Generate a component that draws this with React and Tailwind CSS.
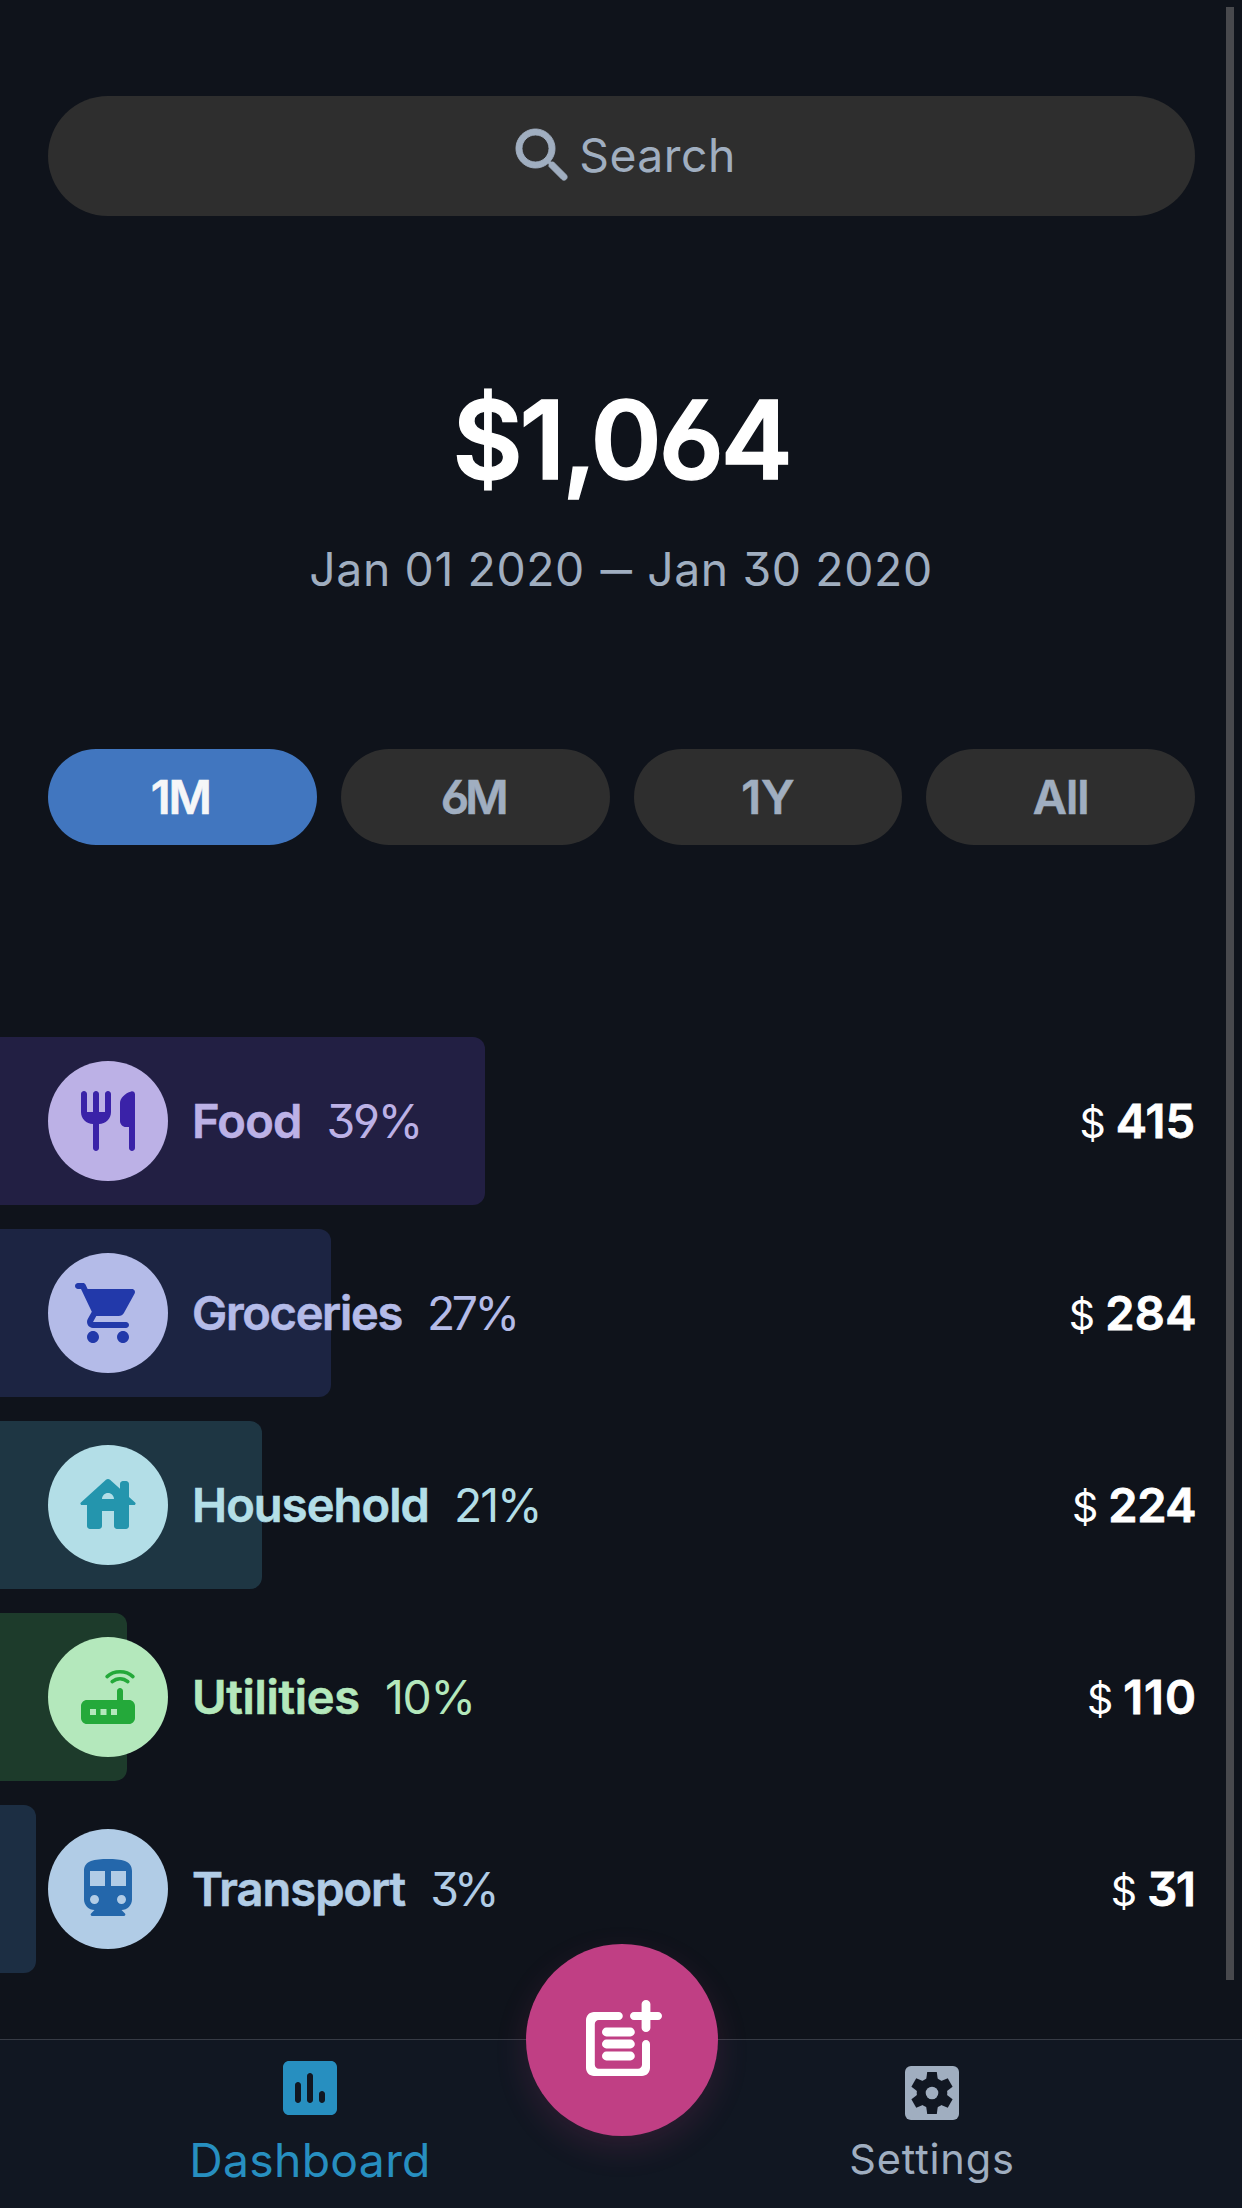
import React from "react";

function Icon({ className, children }) {
  return (
    <svg viewBox="0 0 24 24" fill="currentColor" className={`shrink-0 ${className}`} aria-hidden="true">
      {children}
    </svg>
  );
}

const SearchIcon = () => (
  <Icon className="size-[72px]">
    <path
      stroke="currentColor"
      strokeWidth="0.3"
      d="M15.5 14h-.79l-.28-.27c1.2-1.4 1.82-3.31 1.48-5.34-.47-2.78-2.79-5-5.59-5.34-4.23-.52-7.79 3.04-7.27 7.27.34 2.8 2.56 5.12 5.34 5.59 2.03.34 3.94-.28 5.34-1.48l.27.28v.79l4.25 4.25c.41.41 1.08.41 1.49 0 .41-.41.41-1.08 0-1.49L15.5 14zm-6 0C7.01 14 5 11.99 5 9.5S7.01 5 9.5 5 14 7.01 14 9.5 11.99 14 9.5 14z"
    />
  </Icon>
);

const FoodIcon = () => (
  <Icon className="size-[72px]">
    <path d="M16 6v6c0 1.1.9 2 2 2h1v7c0 .55.45 1 1 1s1-.45 1-1V3.13c0-.65-.61-1.13-1.24-.98C17.6 2.68 16 4.51 16 6zm-5 3H9V3c0-.55-.45-1-1-1s-1 .45-1 1v6H5V3c0-.55-.45-1-1-1s-1 .45-1 1v6c0 2.21 1.79 4 4 4v8c0 .55.45 1 1 1s1-.45 1-1v-8c2.21 0 4-1.79 4-4V3c0-.55-.45-1-1-1s-1 .45-1 1v6z" />
  </Icon>
);

const CartIcon = () => (
  <Icon className="size-[72px]">
    <path d="M7 18c-1.1 0-1.99.9-1.99 2S5.9 22 7 22s2-.9 2-2-.9-2-2-2zM1 3c0 .55.45 1 1 1h1l3.6 7.59-1.35 2.44C4.52 15.37 5.48 17 7 17h11c.55 0 1-.45 1-1s-.45-1-1-1H7l1.1-2h7.45c.75 0 1.41-.41 1.75-1.03l3.58-6.49c.37-.66-.11-1.48-.87-1.48H5.21l-.67-1.43c-.16-.35-.52-.57-.9-.57H2c-.55 0-1 .45-1 1zm16 15c-1.1 0-1.99.9-1.99 2s.89 2 1.99 2 2-.9 2-2-.9-2-2-2z" />
  </Icon>
);

const HouseIcon = () => (
  <Icon className="size-[72px]">
    <path d="M19 9.3V5c0-.55-.45-1-1-1h-1c-.55 0-1 .45-1 1v1.6l-3.33-3c-.38-.34-.96-.34-1.34 0l-8.36 7.53c-.34.3-.13.87.33.87H5v7c0 .55.45 1 1 1h3c.55 0 1-.45 1-1v-5h4v5c0 .55.45 1 1 1h3c.55 0 1-.45 1-1v-7h1.7c.46 0 .68-.57.33-.87L19 9.3zM10 10c0-1.1.9-2 2-2s2 .9 2 2h-4z" />
  </Icon>
);

const RouterIcon = () => (
  <Icon className="size-[72px]">
    <path d="M19 13h-2v-3c0-.55-.45-1-1-1s-1 .45-1 1v3H5c-1.1 0-2 .9-2 2v4c0 1.1.9 2 2 2h14c1.1 0 2-.9 2-2v-4c0-1.1-.9-2-2-2zM8 18H6v-2h2v2zm3.5 0h-2v-2h2v2zm3.5 0h-2v-2h2v2z" />
    <g fill="none" stroke="currentColor" strokeWidth="1.2" strokeLinecap="round">
      <path d="M11.7 5.2C12.9 4.1 14.4 3.6 16 3.6s3.1.5 4.3 1.6" />
      <path d="M13.4 6.9c.7-.6 1.6-1 2.6-1s1.9.4 2.6 1" />
    </g>
  </Icon>
);

const TrainIcon = () => (
  <Icon className="size-[72px]">
    <path d="M12 2c-4.42 0-8 .5-8 4v9.5C4 17.43 5.57 19 7.5 19l-1.15 1.15c-.31.31-.09.85.36.85H17.3c.45 0 .66-.54.35-.85L16.5 19c1.93 0 3.5-1.57 3.5-3.5V6c0-3.5-3.58-4-8-4zM7.5 17c-.83 0-1.5-.67-1.5-1.5S6.67 14 7.5 14s1.5.67 1.5 1.5S8.33 17 7.5 17zm3.5-6H6V6h5v5zm5.5 6c-.83 0-1.5-.67-1.5-1.5s.67-1.5 1.5-1.5 1.5.67 1.5 1.5-.67 1.5-1.5 1.5zm1.5-6h-5V6h5v5z" />
  </Icon>
);

const PostAddIcon = () => (
  <Icon className="size-[96px]">
    <path d="M17 13v5.2c0 .55-.45 1-1 1H6.2c-.55 0-1-.45-1-1V8c0-.55.45-1 1-1h5c.55 0 1-.45 1-1s-.45-1-1-1H5c-1.1 0-2 .9-2 2v12c0 1.1.9 2 2 2h12c1.1 0 2-.9 2-2v-6c0-.55-.45-1-1-1s-1 .45-1 1z" />
    <path d="M18 2c-.6 0-1.1.45-1.1 1v2H15c-.55 0-1 .45-1 1s.45 1 1 1h1.900v2c0 .55.5 1 1.100 1s1.100-.45 1.100-1V7H21c.55 0 1-.45 1-1s-.45-1-1-1h-1.900V3c0-.55-.5-1-1.100-1z" />
    <rect x="7" y="8.9" width="8.2" height="2.2" rx="1.1" />
    <rect x="7" y="11.9" width="8.2" height="2.2" rx="1.1" />
    <rect x="7" y="14.9" width="8.2" height="2.2" rx="1.1" />
  </Icon>
);

const DashboardIcon = () => (
  <Icon className="size-[72px]">
    <path d="M19 3H5c-1.1 0-2 .9-2 2v14c0 1.1.9 2 2 2h14c1.1 0 2-.9 2-2V5c0-1.1-.9-2-2-2zM8 17c-.55 0-1-.45-1-1v-5c0-.55.45-1 1-1s1 .45 1 1v5c0 .55-.45 1-1 1zm4 0c-.55 0-1-.45-1-1V8c0-.55.45-1 1-1s1 .45 1 1v8c0 .55-.45 1-1 1zm4 0c-.55 0-1-.45-1-1v-2c0-.55.45-1 1-1s1 .45 1 1v2c0 .55-.45 1-1 1z" />
  </Icon>
);

const TOOTH_ANGLES = [0, 60, 120, 180, 240, 300];

const SettingsIcon = () => (
  <Icon className="size-[72px]">
    <rect x="3" y="3" width="18" height="18" rx="2" />
    <g className="fill-[#111722]">
      <circle cx="12" cy="12" r="5.1" />
      {TOOTH_ANGLES.map((a) => (
        <path key={a} d="M10.4 5h3.2l.4 3-.8 2h-2.4L10 8z" transform={`rotate(${a} 12 12)`} />
      ))}
    </g>
    <circle cx="12" cy="12" r="2.1" />
  </Icon>
);

const periods = [
  { label: "1M", style: "bg-[#4176bf] text-[#f5f6f8] tracking-[-2px] pr-[4px]" },
  { label: "6M", style: "bg-[#2e2e2e] tracking-[-4px] pr-[5px]" },
  { label: "1Y", style: "bg-[#2e2e2e] tracking-[0px]" },
  { label: "All", style: "bg-[#2e2e2e] tracking-[-1px]" },
];

const categories = [
  { name: "Food", pct: "39%", amount: "415", Glyph: FoodIcon, bar: "w-[485px] bg-[#221f43]", disc: "bg-[#bcb1e6] text-[#3a22a8]", text: "text-[#bcb1e6]", nameTrack: "tracking-[-0.8px]", pctTrack: "tracking-[-2.2px]", amountTrack: "" },
  { name: "Groceries", pct: "27%", amount: "284", Glyph: CartIcon, bar: "w-[331px] bg-[#1c2442]", disc: "bg-[#b4bbe8] text-[#2239aa]", text: "text-[#b4bbe8]", nameTrack: "tracking-[-1.3px]", pctTrack: "tracking-[-3.5px]", amountTrack: "tracking-[0.4px] -mr-[2px]" },
  { name: "Household", pct: "21%", amount: "224", Glyph: HouseIcon, bar: "w-[262px] bg-[#1e3643]", disc: "bg-[#b3dee7] text-[#2495ad]", text: "text-[#b3dee7]", nameTrack: "tracking-[-0.9px]", pctTrack: "tracking-[-2px]", amountTrack: "tracking-[-0.5px] -mr-[1px]" },
  { name: "Utilities", pct: "10%", amount: "110", Glyph: RouterIcon, bar: "w-[127px] bg-[#1d3b2b]", disc: "bg-[#b4e8bc] text-[#24a93a]", text: "text-[#b4e8bc]", nameTrack: "tracking-[-0.3px]", pctTrack: "tracking-[-1.2px]", amountTrack: "tracking-[1px] -mr-[2px]" },
  { name: "Transport", pct: "3%", amount: "31", Glyph: TrainIcon, bar: "w-[36px] bg-[#1c2e43]", disc: "bg-[#b1cce6] text-[#2467ab]", text: "text-[#b1cce6]", nameTrack: "tracking-[-1px]", pctTrack: "tracking-[-5px]", amountTrack: "tracking-[-1px]" },
];

function CategoryRow({ name, pct, amount, Glyph, bar, disc, text, nameTrack, pctTrack, amountTrack }) {
  return (
    <li className="relative flex h-[168px] items-center pr-[47px] pl-12">
      <div className={`absolute inset-y-0 left-0 rounded-r-xl ${bar}`} />
      <div className="relative flex w-full items-center">
        <div className={`flex size-[120px] items-center justify-center rounded-full ${disc}`}>
          <Glyph />
        </div>
        <div className={`ml-6 flex items-baseline gap-[25px] ${text}`}>
          <span className={`text-[47px] font-semibold [-webkit-text-stroke:0.6px_currentColor] ${nameTrack}`}>{name}</span>
          <span className={`text-[46.3px] ${pctTrack}`}>{pct}</span>
        </div>
        <div className="ml-auto flex items-baseline gap-2.5 text-white">
          <span className="text-[41px]">$</span>
          <span className={`text-[47px] font-semibold [-webkit-text-stroke:0.8px_currentColor] ${amountTrack}`}>{amount}</span>
        </div>
      </div>
    </li>
  );
}

export default function App() {
  return (
    <div className="relative flex h-[2208px] w-[1242px] flex-col overflow-hidden bg-[#0f131b] pt-24 font-['Inter','Liberation_Sans',sans-serif] text-[#a0aec0] [font-feature-settings:'cv03','cv04','cv09']">
      <div className="mr-[47px] ml-12 flex h-[120px] shrink-0 items-center justify-center rounded-full bg-[#2e2e2e]">
        <SearchIcon />
        <span className="text-[46.3px] tracking-[0.5px]">Search</span>
      </div>

      <h1 className="mt-[164px] text-center text-[108px] leading-[120px] font-semibold tracking-[-3.1px] text-white [-webkit-text-stroke:1.4px_#fff]">$1,064</h1>
      <p className="mt-[39px] text-center text-[46.3px] leading-[60px] tracking-[0.63px]">
        Jan 01 2020 <span className="-mx-[6px] inline-block scale-x-[0.68]">—</span> Jan 30 2020
      </p>

      <div className="mt-[150px] mr-[47px] ml-12 grid grid-cols-4 gap-6">
        {periods.map(({ label, style }) => (
          <button key={label} className={`flex h-24 items-center justify-center rounded-full text-[47px] font-semibold [-webkit-text-stroke:0.6px_currentColor] ${style}`}>
            {label}
          </button>
        ))}
      </div>

      <ul className="mt-[192px] flex flex-col gap-6">
        {categories.map((c) => (
          <CategoryRow key={c.name} {...c} />
        ))}
      </ul>

      <nav className="relative mt-auto flex h-[169px] shrink-0 border-t border-[#363b45] bg-[#111722]">
        <a className="flex flex-1 flex-col items-center pt-3 text-[#278fc0]">
          <DashboardIcon />
          <span className="mt-[6px] text-[46.3px] leading-[60px] tracking-[0.3px]">Dashboard</span>
        </a>
        <a className="flex flex-1 flex-col items-center pt-[17px] pl-[2px]">
          <SettingsIcon />
          <span className="text-[41.5px] leading-[60px] tracking-[0.8px]">Settings</span>
        </a>
        <button className="absolute -top-24 left-[526px] flex size-48 items-center justify-center rounded-full bg-[#c03f84] text-white shadow-[0_12px_32px_rgba(192,63,132,0.16)]">
          <PostAddIcon />
        </button>
      </nav>

      <div className="absolute top-[7px] right-2 h-[1973px] w-2 bg-[#48494d]" />
    </div>
  );
}
